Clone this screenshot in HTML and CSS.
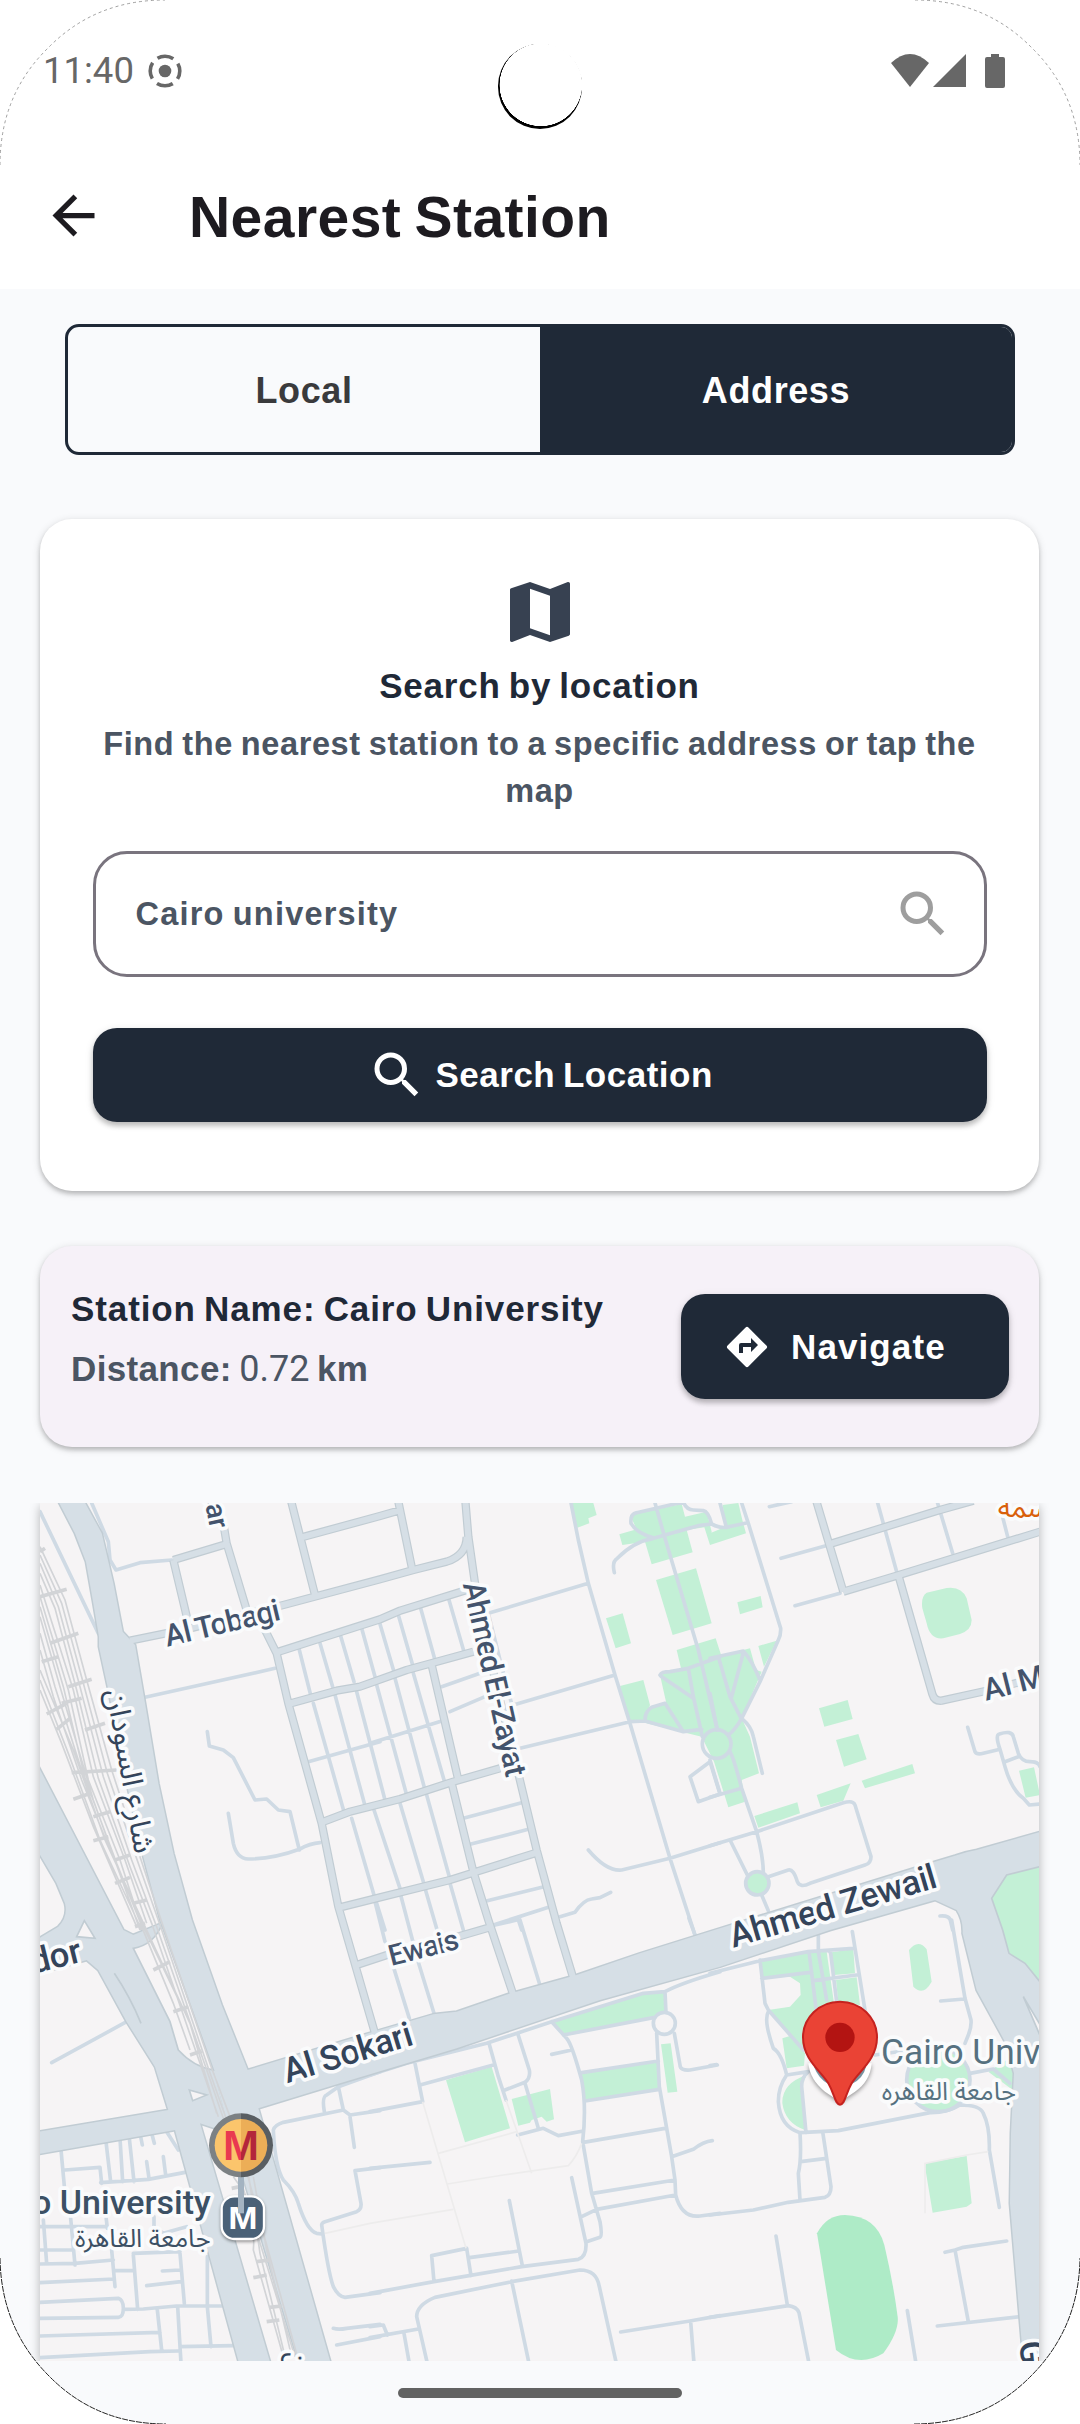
FILE: index.html
```html
<!DOCTYPE html>
<html lang="en">
<head>
<meta charset="utf-8">
<title>Nearest Station</title>
<link rel="stylesheet" href="styles.css">
</head>
<body>
<div class="device">
  <header class="top">
    <div class="status">
      <span class="clock">11:40</span>
      <svg class="cast" viewBox="0 0 34 34"><circle cx="17" cy="17" r="6.3" fill="#676767"/><circle class="cast-ring" cx="17" cy="17" r="14.8"/></svg>
      <svg class="signals" viewBox="0 0 116 36">
        <path d="M1 10Q20-8 39 10L20 34Z"/><path d="M76 1V34H43Z"/>
        <path d="M101 1h8v3h4q2 0 2 2v27q0 2-2 2H97q-2 0-2-2V6q0-2 2-2h4z"/>
      </svg>
    </div>
    <div class="appbar">
      <svg class="back" viewBox="0 0 24 24"><path d="M20 11H7.83l5.59-5.59L12 4l-8 8 8 8 1.41-1.41L7.83 13H20v-2z"/></svg>
      <h1>Nearest Station</h1>
    </div>
  </header>
  <main class="content">
    <div class="tabs"><div class="tab">Local</div><div class="tab active">Address</div></div>
    <section class="card search">
      <svg class="map-icon" viewBox="0 0 24 24"><path d="M20.5 3l-.16.03L15 5.1 9 3 3.36 4.9c-.21.07-.36.25-.36.48V20.5c0 .28.22.5.5.5l.16-.03L9 18.9l6 2.1 5.64-1.9c.21-.07.36-.25.36-.48V3.5c0-.28-.22-.5-.5-.5zM15 19l-6-2.11V5l6 2.11V19z"/></svg>
      <h2>Search by location</h2>
      <p class="hint">Find the nearest station to a specific address or tap the map</p>
      <div class="field"><span>Cairo university</span>
        <svg class="lens" viewBox="0 0 24 24"><path d="M15.5 14h-.79l-.28-.27A6.47 6.47 0 0 0 16 9.5 6.5 6.5 0 1 0 9.5 16c1.61 0 3.09-.59 4.23-1.57l.27.28v.79l5 4.99L20.49 19l-4.99-5zm-6 0C7.01 14 5 11.99 5 9.5S7.01 5 9.5 5 14 7.01 14 9.5 11.99 14 9.5 14z"/></svg>
      </div>
      <div class="button wide">
        <svg class="lens" viewBox="0 0 24 24"><path d="M15.5 14h-.79l-.28-.27A6.47 6.47 0 0 0 16 9.5 6.5 6.5 0 1 0 9.5 16c1.61 0 3.09-.59 4.23-1.57l.27.28v.79l5 4.99L20.49 19l-4.99-5zm-6 0C7.01 14 5 11.99 5 9.5S7.01 5 9.5 5 14 7.01 14 9.5 11.99 14 9.5 14z"/></svg>
        <span>Search Location</span>
      </div>
    </section>
    <section class="card result">
      <div class="facts">
        <div class="station">Station Name: Cairo University</div>
        <div class="distance">Distance: <span class="num">0.72</span> km</div>
      </div>
      <div class="button navigate">
        <svg class="directions" viewBox="0 0 24 24"><path d="M21.71 11.29l-9-9a1 1 0 0 0-1.42 0l-9 9a1 1 0 0 0 0 1.42l9 9a1 1 0 0 0 1.42 0l9-9a1 1 0 0 0 0-1.42zM14 14.5V12h-4v3H8v-4a1 1 0 0 1 1-1h5V7.5l3.5 3.5-3.5 3.5z"/></svg>
        <span>Navigate</span>
      </div>
    </section>
    <div class="map-clip">
    <svg class="map" viewBox="30 39 2997 2574">
      <defs>
        <g id="streets">
          <path d="M300 452L480 415 760 345 1050 268 1150 240 1250 215Q1310 195 1310 140M430 210L590 162M430 210L475 400M580 100L590 160 650 360 705 420 740 490 775 640 875 1000 925 1250 1035 1630M780 20L855 315M815 142L1050 78 1105 62M1102 20L1147 240M1305 20L1315 140 1335 280 1395 570 1460 830 1520 1080 1580 1300 1630 1465M740 487L1050 388 1110 362 1310 300M775 642L920 602 990 590 1130 540 1330 485M875 997L960 965 1110 927 1270 875 1410 835M930 1252L1050 1222 1260 1170 1520 1088M1205 525L1285 870M1265 880L1330 1145 1375 1290 1450 1515M980 1425L1080 1392 1290 1338 1380 1312"/>
          <path d="M2355 20L2440 305M2390 165L2730 60 2830 32M2440 305L2600 257 3040 122M2605 255L2707 612Q2713 634 2735 632L2880 600 3030 560"/>
        </g>
        <g id="arterials">
          <path d="M78 20L135 130 168 215 190 340 207 440V470L235 600 290 880 340 1100 395 1305 550 1740 600 1930 810 2630H905L685 1855 930 1780 1280 1675 1710 1530 2070 1430 2400 1320 2715 1230 2780 1260Q2800 1290 2798 1330L2840 1500 2925 1655 2952 1750 2943 1930 2940 2140 2975 2555 2982 2640H3050V1020L2840 1080Q2810 1085 2775 1097L2715 1115 2070 1315 1830 1390 1640 1455 1435 1512 1280 1565 1210 1573 1015 1630 653 1740 575 1545 485 1290 430 1090 385 880 345 640 315 465 278 425 250 280 215 130 155 20Z"/>
          <path d="M10 800L280 1320 310 1335 395 1300 550 1740 600 1930 510 1900 724 2630H630L435 1920 10 1995V1928L415 1860 375 1730 290 1595 205 1440 170 1410 10 1455V1355L85 1310Q115 1280 105 1240L80 1180 10 1060Z"/>
        </g>
        <linearGradient id="mRed"><stop offset=".5" stop-color="#e93850"/><stop offset=".5" stop-color="#b3253b"/></linearGradient>
        <linearGradient id="mRing"><stop offset=".5" stop-color="#7c8184"/><stop offset=".5" stop-color="#595e62"/></linearGradient>
        <linearGradient id="mFace"><stop offset=".5" stop-color="#fbc56c"/><stop offset=".5" stop-color="#ecae57"/></linearGradient>
      </defs>
      <rect x="30" y="39" width="2997" height="2574" fill="#f6f4f5"/>

      <g class="park">
        <path d="M1625 39L1690 39 1700 75 1675 85 1678 100 1642 113ZM1800 75L1955 42 1965 80 2030 65 2045 125 2040 165 2023 112 1970 120 1988 187 1865 223 1845 155 1777 165 1768 133 1820 118ZM1878 270L1998 235 2045 400 1928 435ZM1728 385L1778 370 1803 460 1757 475ZM1770 588L1840 570 1860 645 1845 690 1795 690Z"/>
        <path d="M1940 480L2057 445 2075 500 2140 480 2160 475 2178 540 2195 545 2135 685 2160 740 2187 850 2135 870 2145 935 2095 952 2052 815 2015 740 1850 700 1845 680 1865 650 1908 635 1890 555 1953 535Z"/>
        <g transform="translate(2040 0)"><path d="M38 45L85 39 97 90 108 130 0 165V130L47 110ZM145 468L200 452 162 530ZM82 337L152 318 158 352 90 373ZM650 308L710 294Q755 288 770 325L785 390Q785 420 750 432L700 445Q660 450 650 400L637 355Q632 320 650 308ZM327 655L413 630 428 687 343 710ZM378 750L445 732 470 808 402 830ZM455 872L607 822 615 850 465 895ZM320 915L422 880 400 932 332 952ZM133 978L262 937 270 970 145 1013ZM927 842L972 832 990 915 947 923Z"/></g>
        <g transform="translate(1020 1290)"><path d="M545 305L820 222 885 218V285L580 342ZM228 480L365 440 420 625 285 667ZM425 537L540 507 552 598 530 605 515 590 485 600 480 608 445 617ZM632 460L863 425 865 507 645 540ZM873 373L902 370 922 515 893 518Z"/></g>
        <g transform="translate(2040 1290)"><path d="M150 125L295 97 350 95 372 250 330 400 280 390 175 270 240 260 272 225 270 190 240 170 155 175ZM365 97L430 87 435 160 372 165ZM378 180L440 172 450 255 385 250ZM597 90Q625 55 650 88L665 185Q640 230 610 200ZM217 355L250 345 285 400 282 437 230 445ZM290 465Q215 490 217 550 225 610 285 630L273 500ZM835 455L890 420 912 460 908 510ZM645 740Q645 730 660 727L770 708 785 850 770 860 668 878Z"/><circle cx="685" cy="480" r="93"/><path class="pitch" d="M321 940Q350 885 405 885 500 888 523 975 550 1090 563 1190 568 1235 520 1300 445 1345 378 1290Z"/></g>
      </g>

      <g class="minor">
        <path d="M30 65L205 430M185 39L235 155 240 210 258 240 330 218 425 210M345 622L735 535M532 725L538 768 580 780 610 803 675 930 710 927 745 960 780 965 808 1080M595 970L610 1060Q620 1105 655 1107 730 1107 808 1078 840 1060 870 1058M808 480L842 615M870 460L908 590M932 438L972 575M995 415L1035 560M835 815L1050 755M850 640L942 965M915 615L1003 940M980 605L1065 930M965 985L1032 1215M1040 1240L1065 1320"/>
        <g transform="translate(1020 0)"><path d="M28 395L72 545M85 375L128 525M152 355L195 510M237 330L282 485M20 585L110 915M75 565L165 900M130 550L225 880M0 760L225 690M215 590L330 550M240 665L345 620M12 960L90 1195M90 940L160 1175M170 915L238 1160M280 985L455 938M300 1063L475 1018M352 1232L522 1190M370 1305L540 1250M15 1235L45 1355M92 1215L130 1360M165 1195L210 1350M240 1180L280 1320M445 1290L455 1320M355 370L655 280M355 370L395 530 430 660M430 645L735 555M450 775L780 695 825 693 940 725 995 718M603 39L625 150 655 280 735 555 780 700 900 1105 975 1335M655 1080Q710 1145 755 1140L900 1105 1050 1058M570 1280L615 1267Q640 1230 665 1227L690 1223 722 1207M733 248Q725 215 742 205 790 155 850 145L985 107 1025 102Q1050 115 1070 112M850 143Q800 130 783 100 780 72 800 68L940 36Q950 60 970 60L1000 62Q1015 65 1025 102M855 39L885 145 985 480 1042 720M870 555Q875 545 900 545L955 535 1050 500M955 535L970 620 997 740M872 558L970 625M825 690Q825 665 845 652L885 640 940 725M1020 815L960 860 985 935 1050 912Z"/></g>
        <g transform="translate(2040 0)"><circle cx="20" cy="762" r="43"/><path d="M0 505L100 483Q125 510 150 570M25 500L60 620 95 688M100 488L65 620M0 610L22 720M95 39L115 100 212 415Q213 435 205 450L150 575 95 685Q75 720 55 735M95 685Q125 710 130 740L157 850M60 785Q70 800 95 895L140 1025Q160 1100 160 1150M0 810L30 910M0 922L95 895M30 39L48 108M50 112L112 98M0 1067L140 1025 400 938Q430 930 435 945L483 1100Q483 1120 465 1125L300 1180Q270 1195 262 1175 250 1135 235 1140L175 1160M60 1050L112 1155M155 1215L175 1262M178 50L245 35M213 205L345 168M255 347L390 310M503 39L560 245M680 30L728 190M870 50L893 140M773 712L795 785Q800 795 820 790L870 778M885 815L925 800M870 778Q855 735 868 732 905 720 910 740L925 790Q935 815 960 815 985 815 990 830M870 778L885 830Q905 900 940 925L958 945 990 942M690 1278Q720 1275 722 1295L728 1320"/><circle cx="142" cy="1180" r="35" fill="#c3f0d6"/></g>
        <g transform="translate(2040 1290)"><path d="M725 0L765 235 783 300Q785 320 775 345L765 370M692 243L762 237M0 160L150 122 295 95 430 85M325 40L325 95 350 240M297 95L320 280M325 93Q360 88 362 100L380 245M427 35L465 270M155 175L300 157M310 182L440 165M150 120L165 250 175 270 280 390M175 275Q160 300 190 385 215 400 230 465M295 455L230 465Q205 500 205 545 210 620 270 638L385 632 660 578M295 455Q275 470 275 500L288 638M780 460L850 447 900 490M655 578Q710 580 750 555 810 555 820 580 840 620 838 690L868 862M270 638Q275 720 265 760L270 840M338 635L363 800Q363 825 345 832L235 847 130 870 0 885M272 725L350 715M198 948L232 1155M0 1192L235 1157Q260 1160 267 1178L297 1330M592 1172L618 1330M705 997L735 990 760 982 890 963M735 990L775 1205M682 1218L930 1190M495 405L600 390M0 437L20 434"/><circle cx="685" cy="480" r="95"/></g>
        <g transform="translate(1020 1290)"><path d="M140 110L192 280M70 140L118 295M450 0L508 190M375 15L440 0M957-5L975 45M0 465L110 430 350 370 545 305 820 220 885 215Q930 190 1050 155M135 430L158 545 0 575M150 495L370 435M357 370L385 470 408 540M443 340L478 450Q482 475 465 487L405 510M465 490L505 625M443 645L520 625 565 647 640 633M545 305L590 355Q605 370 635 480 650 560 638 665L665 820 690 905Q698 950 690 952L650 965M545 403L605 390M580 345L850 293M885 215L888 280M860 340L868 500 905 710 915 780 917 825Q935 895 990 888L1050 880M913 340L930 435Q930 452 960 450L1042 435M635 458L865 423M645 543L868 508M640 667L885 625M905 710L970 688Q1000 665 1027 662M668 820L915 780M635 890L680 868 917 825M605 773L648 970Q650 1010 625 1018L455 1040 192 1085 0 1120M418 842L457 1037M298 1013L447 993M192 1085L185 1007 290 985 303 1067M0 745L180 727M172 1330L140 1190Q140 1155 195 1132L425 1085 630 1050Q680 1050 688 1100L739 1330M425 1083L477 1330M752 1236L960 1203 1050 1187M962 1205L972 1330M0 1220L40 1215 52 1245M0 1253L145 1227M102 1240L118 1330"/><circle cx="883" cy="310" r="33" fill="#f6f4f5"/></g>
        <g transform="translate(-90 1290)"><path d="M155 428L380 305M183 690L195 820M195 750L300 742 305 790M318 665L332 785M360 655L368 785M388 655L402 785M302 788L445 778 555 757M420 640L427 675M455 640L463 670M440 725L447 775M490 710L497 765M500 635L535 690M120 920H320M212 895L225 1035M130 900L140 1030M120 990H220M120 1032L225 1030 340 1020M318 890L322 925M335 990L345 1100M345 1052H400M400 1000L540 995M400 1005L413 1168M540 1000L553 1150M487 1053L540 1050M440 1097L543 1085M120 1088L343 1077M120 1147L355 1135Q370 1140 370 1165 370 1192 355 1192L120 1195M370 1168L430 1167 530 1158H665M120 1248L480 1237M472 1170L485 1290M120 1313L450 1295 535 1293M533 1160L543 1330M622 1010V1160L633 1280M540 1280L700 1277M462 890V920L490 940 560 920M973 575Q965 530 980 525L1015 500 1140 455M1015 500L1030 570M820 630Q825 615 850 607L1030 570 1050 585 1140 572M1050 590L1063 682M820 630Q825 740 850 780 885 815 895 850 920 930 950 940L965 942M965 915Q965 908 975 905L1070 875Q1085 868 1083 850L1065 752 1140 743M965 915Q985 1060 1000 1100 1015 1130 1035 1132L1140 1118M1000 1225Q1015 1230 1040 1225L1140 1213M1010 1275L1140 1250"/></g>
      </g>
      <g class="footpath">
        <path d="M1178 1835L1308 2275M1225 1990L1460 1925M1252 2082L1420 2055 1615 2027Q1640 2000 1655 1960M1428 1830L1505 2050M885 2230L1020 2200 1270 2158M2685 2170V2020L2810 1995 2875 1985"/>
      </g>

      <g class="casing"><use href="#streets"/><use class="area" href="#arterials"/></g>
      <g class="surface"><use href="#streets"/><use class="area" href="#arterials"/></g>
      <g class="island">
        <path d="M310 1375Q370 1365 395 1305L550 1740Q490 1730 445 1680L420 1595ZM140 1340L163 1292 195 1345ZM478 1800L530 1815 488 1832ZM2980 1520L3040 1620V1660Z"/>
        <path class="island-park" d="M3040 1127L2930 1155 2885 1225 2918 1320 2937 1390 2985 1420 3040 1488Z"/>
        <path d="M253 1450Q300 1520 333 1600"/>
      </g>

      <g class="rails">
        <path d="M30 170L105 330 170 570 245 840 330 1100 400 1310 545 1735 600 1880M30 195L95 340 160 580 232 850 318 1100 392 1310 535 1735 590 1890M30 220L85 350 150 590 220 860 305 1110 380 1310 525 1725 580 1885M30 250L75 355 140 600 205 865 300 1130 365 1300 510 1720 565 1880M30 285L130 600 190 860 285 1110 350 1300M30 320L115 600 175 870 270 1110 335 1310 430 1540 480 1680M30 350L100 590 165 865 260 1120 340 1320M30 380L90 590 190 930 330 1320M30 430L75 590 180 920M30 480L70 620 155 870 240 1080 345 1320 460 1560M30 540L130 780 225 1050 350 1320 480 1600 560 1870M30 570L115 790 210 1050 335 1320M30 600L95 760 190 1010 320 1310"/>
        <path d="M635 2080L795 2600M655 2050L690 2290 770 2620M670 2060L710 2280 785 2600M610 2060Q680 2150 670 2280L760 2600M640 2010L805 2610"/>
        <path class="ties" d="M30 185L45 175M30 320L110 298M60 460L145 430M35 515L85 500M115 590L185 568M95 640L155 625M50 672L110 640M80 718L120 685M165 720L225 700M125 848L260 840M130 928L175 912M190 980L240 965M190 1052L235 1040M255 1110L300 1095M255 1180L300 1162M310 1240L350 1230M315 1310L345 1300M370 1440L420 1415M430 1565L475 1550M480 1695L515 1683M605 2095L630 2090M670 2363L710 2355M680 2315L718 2310M710 2495L748 2490M718 2452L755 2448"/>
      </g>

      <g class="labels">
        <g class="road">
          <text transform="translate(412 470) rotate(-13.4)" font-size="91" textLength="353">Al Tobagi</text>
          <text transform="translate(541 119) rotate(78)" font-size="84" text-anchor="end">sar</text>
          <text transform="translate(1298 283) rotate(77.3)" font-size="92" textLength="596">Ahmed El-Zayat</text>
          <text transform="translate(2868 632) rotate(-14)" font-size="92">Al M</text>
          <text transform="translate(1084 1428) rotate(-14.3)" font-size="87" textLength="214">Ewais</text>
        </g>
        <g class="road main">
          <text class="arabic" transform="translate(228 602) rotate(80)" font-size="88" textLength="500" lengthAdjust="spacingAndGlyphs">شارع السودان</text>
          <text transform="translate(2110 1373) rotate(-16.5)" font-size="104" textLength="643">Ahmed Zewail</text>
          <text transform="translate(772 1780) rotate(-17)" font-size="104" textLength="400">Al Sokari</text>
          <text transform="translate(160 1414) rotate(-14)" font-size="104" text-anchor="end">dor</text>
          <text class="arabic" transform="translate(766 2588) rotate(74)" font-size="84">ين</text>
          <text transform="translate(2968 2556) rotate(84)" font-size="104">G</text>
        </g>
        <text class="shop arabic" x="2903" y="80" font-size="84">سمة</text>
        <g class="transit">
          <text x="542" y="2172" font-size="102" text-anchor="end">Cairo University</text>
          <text class="arabic" x="135" y="2272" font-size="76" textLength="407" lengthAdjust="spacingAndGlyphs">جامعة القاهرة</text>
        </g>
        <g class="campus">
          <text x="2553" y="1722" font-size="106">Cairo University</text>
          <text class="arabic" x="2555" y="1830" font-size="76" textLength="403" lengthAdjust="spacingAndGlyphs">جامعة القاهره</text>
        </g>
      </g>

      <g transform="translate(-90 1290)">
        <rect class="badge" x="665" y="829" width="127" height="128" rx="38"/>
        <text class="metro" x="685" y="927" font-size="96" textLength="88" lengthAdjust="spacingAndGlyphs" fill="#fff">M</text>
        <rect x="714" y="765" width="18" height="115" fill="#a3b3c1"/>
        <circle cx="723" cy="676" r="96" fill="url(#mRing)"/><circle cx="723" cy="676" r="79" fill="url(#mFace)"/>
        <text class="metro" x="669" y="720" font-size="126" textLength="108" lengthAdjust="spacingAndGlyphs" fill="url(#mRed)">M</text>
      </g>
      <g transform="translate(2040 1290)">
        <path class="poi" d="M295 430Q300 480 345 515L390 545 435 515Q480 485 485 430Z"/>
        <path d="M312 440Q325 475 355 492H425Q460 475 468 440Z" fill="#78929f"/>
        <path d="M390 245C453 245 501 294 501 352 501 420 445 455 425 490 405 525 405 554 390 554S375 525 355 490C335 455 279 420 279 352 279 294 327 245 390 245Z" fill="#ea4335" stroke="#c5221f" stroke-width="6"/>
        <circle cx="390" cy="352" r="44" fill="#b31412"/>
      </g>
    </svg>
    </div>
  </main>
  <div class="pill"></div>
</div>
<div class="camera"></div>
<svg class="outline" viewBox="0 0 1080 2424">
  <path class="upper" d="M0 165Q0 95 48 48 95 0 165 0M915 0Q985 0 1032 48 1080 95 1080 165"/>
  <path class="lower" d="M0 2258Q1 2328 49 2376 96 2424 166 2424M914 2424Q984 2424 1031 2376 1079 2328 1080 2258"/>
</svg>
</body>
</html>
```

FILE: styles.css
```css
* { box-sizing: border-box; }
body { margin: 0; width: 1080px; height: 2424px; position: relative; overflow: hidden; background: #fff; font-family: "Liberation Sans", Arial, sans-serif; font-weight: 700; }
h1, h2, p { margin: 0; }
svg { display: block; }
.device { display: flex; flex-direction: column; height: 2424px; background: #f9fafc; border-radius: 0 0 166px 166px; overflow: hidden; }
.top { background: #fff; height: 289px; }
.status { display: flex; align-items: center; height: 141px; padding: 0 74px 0 43px; }
.clock { font: 400 36.5px Roboto, sans-serif; color: #676767; width: 105px; }
.cast { width: 34px; height: 34px; }
.cast-ring { fill: none; stroke: #676767; stroke-width: 3.6; stroke-dasharray: 16.6 6.65; stroke-dashoffset: 8.3; }
.signals { width: 116px; height: 36px; margin-left: auto; fill: #676767; }
.appbar { display: flex; align-items: center; height: 148px; padding-left: 42px; gap: 84px; color: #1d1b20; }
.back { width: 63px; height: 63px; fill: #1d1b20; }
h1 { font-size: 57px; line-height: 70px; padding-top: 3px; letter-spacing: .45px; word-spacing: -3px; }
.content { padding: 35px 41px 0 40px; }
.tabs { display: flex; height: 131px; margin: 0 24px 0 25px; border: 3px solid #1f2937; border-radius: 14px; overflow: hidden; font-size: 36px; letter-spacing: .6px; }
.tab { flex: 1; display: flex; align-items: center; justify-content: center; padding-top: 2px; color: #3a3a3c; }
.active { background: #1f2937; color: #fff; }
.card { border-radius: 32px; box-shadow: 0 3px 4px rgba(0,0,0,.18), 0 2px 9px rgba(0,0,0,.14); }
.search { display: flex; flex-direction: column; align-items: center; height: 672px; margin-top: 64px; padding: 53px; background: #fff; }
.map-icon { width: 80px; height: 80px; fill: #374151; flex: none; }
h2 { font-size: 35px; line-height: 48px; letter-spacing: .8px; word-spacing: -2.5px; color: #1f2937; margin-top: 10px; }
.hint { width: 893px; text-align: center; font-size: 32.5px; line-height: 47px; letter-spacing: .62px; word-spacing: -1.7px; color: #4b5563; margin-top: 11px; }
.field { display: flex; flex: none; align-items: center; justify-content: space-between; width: 894px; height: 126px; margin-top: 36px; padding: 0 31px 0 40px; border: 3px solid #79747e; border-radius: 34px; font-size: 32.5px; letter-spacing: 1.2px; word-spacing: -2px; color: #4b5563; }
.lens { width: 60px; height: 60px; fill: #9e9e9e; }
.button { display: flex; flex: none; align-items: center; background: #1f2937; color: #fff; border-radius: 24px; font-size: 35px; box-shadow: 0 4px 5px rgba(0,0,0,.2), 0 2px 8px rgba(0,0,0,.12); }
.button .lens { fill: #fff; }
.wide { width: 894px; height: 94px; margin-top: 51px; padding-left: 274px; gap: 9px; letter-spacing: .5px; word-spacing: -2.5px; }
.result { display: flex; align-items: center; justify-content: space-between; height: 201px; margin-top: 55px; padding: 0 30px 0 31px; background: #f6f1f8; }
.facts { font-size: 35px; line-height: 60px; margin-bottom: 16px; word-spacing: -2.5px; }
.station { color: #1f2937; letter-spacing: .9px; }
.distance { color: #4b5563; letter-spacing: .35px; }
.num { font-family: Roboto, sans-serif; font-weight: 400; font-size: 36px; letter-spacing: 0; }
.navigate { width: 328px; height: 105px; padding-left: 42px; gap: 20px; letter-spacing: 1.1px; }
.directions { width: 48px; height: 48px; fill: #fff; }
.map-clip { margin: 56px -16px 0; padding: 0 16px; height: 858px; overflow: hidden; }
.map { width: 999px; height: 858px; box-shadow: 0 3px 10px rgba(0,0,0,.28); }
.pill { width: 284px; height: 10px; margin: 27px auto 0; border-radius: 5px; background: #626262; flex: none; }

.park { fill: #c3f0d6; }
.pitch { fill: #aeebc7; }
.minor { fill: none; stroke: #cfdae4; stroke-width: 11; stroke-linecap: round; stroke-linejoin: round; }
.footpath { fill: none; stroke: #edecec; stroke-width: 5; }
.casing { fill: none; stroke: #c1ccd3; stroke-width: 25; stroke-linejoin: round; }
.casing .area { fill: #c1ccd3; stroke-width: 9; }
.surface { fill: none; stroke: #d6dfe6; stroke-width: 18; stroke-linejoin: round; }
.surface .area { fill: #d6dfe6; stroke: none; }
.island { fill: #f6f4f5; stroke: #c1ccd3; stroke-width: 5; }
.island-park { fill: #c3f0d6; }
.island path:last-child { fill: none; }
.rails { fill: none; stroke: #d2d4d7; stroke-width: 5; }
.ties { stroke-width: 11; }
.labels { font-family: Roboto, "DejaVu Sans", sans-serif; font-weight: 500; stroke: #fafbfc; stroke-width: 22; stroke-linejoin: round; paint-order: stroke; }
.arabic { font-family: "Noto Sans Arabic", "DejaVu Sans", sans-serif; font-weight: 400; }
.road { fill: #43536c; }
.main { fill: #34445a; }
.shop { fill: #d9600b; }
.transit { fill: #3c5064; }
.campus { fill: #567180; font-weight: 400; }
.metro { font-family: "Liberation Sans", Arial, sans-serif; font-weight: 700; }
.badge { fill: #4a6177; stroke: #fff; stroke-width: 7; filter: drop-shadow(0 5px 5px rgba(0,0,0,.4)); }
.poi { fill: #fff; filter: drop-shadow(0 5px 6px rgba(0,0,0,.4)); }

.camera { position: absolute; left: 497.5px; top: 44px; width: 84.5px; height: 84.5px; border-radius: 50%; background: radial-gradient(circle 41.4px at 42.8px 40.9px, #fff 99%, #000 100%); }
.outline { position: absolute; left: 0; top: 0; width: 1080px; height: 2424px; pointer-events: none; fill: none; }
.upper { stroke: #777; stroke-width: .7; stroke-dasharray: 3 3; }
.lower { stroke: #222; stroke-width: 1; stroke-dasharray: 6 1; }
```
